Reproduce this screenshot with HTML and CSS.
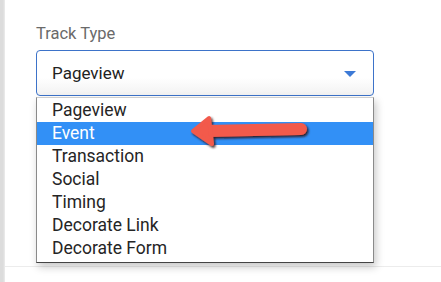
FILE: index.html
```html
<!DOCTYPE html>
<html>
<head>
<meta charset="utf-8">
<link rel="stylesheet" href="styles.css">
</head>
<body>
<div class="page">
  <div class="rail"></div>
  <div class="content">
    <div class="form">
      <div class="label">Track Type</div>
      <div class="select">
        <span class="value">Pageview</span>
        <span class="caret"></span>
      </div>
    </div>
  </div>
  <ul class="menu">
    <li>Pageview</li>
    <li class="active">Event</li>
    <li>Transaction</li>
    <li>Social</li>
    <li>Timing</li>
    <li>Decorate Link</li>
    <li>Decorate Form</li>
  </ul>
  <svg class="arrow" width="130" height="42" viewBox="0 0 130 42">
    <defs>
      <filter id="sh" x="-20%" y="-40%" width="140%" height="180%">
        <feDropShadow dx="1.5" dy="1.8" stdDeviation="1.2" flood-color="#2a1010" flood-opacity="0.9"/>
      </filter>
    </defs>
    <g filter="url(#sh)" fill="#f25a4c" stroke="#f25a4c">
      <line x1="20" y1="18" x2="113" y2="16" stroke-width="12" stroke-linecap="round"/>
      <polygon points="5,18 21,5 24,31" stroke-width="4" stroke-linejoin="round"/>
    </g>
  </svg>
</div>
</body>
</html>
```
FILE: styles.css
```css
html, body {
  margin: 0;
  padding: 0;
  background: #fff;
}
body {
  font-family: Roboto, "Liberation Sans", Arial, sans-serif;
  width: 441px;
  height: 282px;
  overflow: hidden;
}
.page {
  position: relative;
  display: flex;
  height: 282px;
}
.rail {
  width: 5px;
  flex: none;
  background: linear-gradient(to right, #dcdcdc 0, #dcdcdc 3px, #ececec 5px);
}
.content {
  flex: 1;
}
.form {
  height: 267px;
  box-sizing: border-box;
  padding: 24px 0 0 31px;
  border-bottom: 1px solid #ececec;
}
.label {
  font-size: 16.5px;
  line-height: 20px;
  color: #6a6a6a;
  margin-bottom: 6px;
}
.select {
  width: 338px;
  height: 46px;
  box-sizing: border-box;
  border: 1.5px solid #3d73c9;
  border-radius: 4px;
  display: flex;
  align-items: center;
  justify-content: space-between;
  padding: 0 15px 0 15px;
  background: linear-gradient(to bottom, #fff 60%, #f2f2f2 100%);
}
.value {
  font-size: 17px;
  color: #222;
}
.caret {
  width: 0;
  height: 0;
  border-left: 6px solid transparent;
  border-right: 6px solid transparent;
  border-top: 6px solid #3d7ad6;
  margin-right: 2px;
  margin-top: 2px;
}
.menu {
  position: absolute;
  left: 36px;
  top: 97px;
  width: 338px;
  box-sizing: border-box;
  margin: 0;
  padding: 1px 0 2px;
  list-style: none;
  background: #fff;
  border: 1px solid #8a8a8a;
  border-top-color: #cfcfcf;
  border-bottom-color: #444;
  box-shadow: 2px 4px 8px rgba(0,0,0,0.22);
}
.menu li {
  height: 23px;
  line-height: 23px;
  padding-left: 15px;
  font-size: 17.5px;
  color: #252525;
}
.menu li.active {
  background: #3290f6;
  color: #fff;
}
.arrow {
  position: absolute;
  left: 188px;
  top: 113px;
}
```
